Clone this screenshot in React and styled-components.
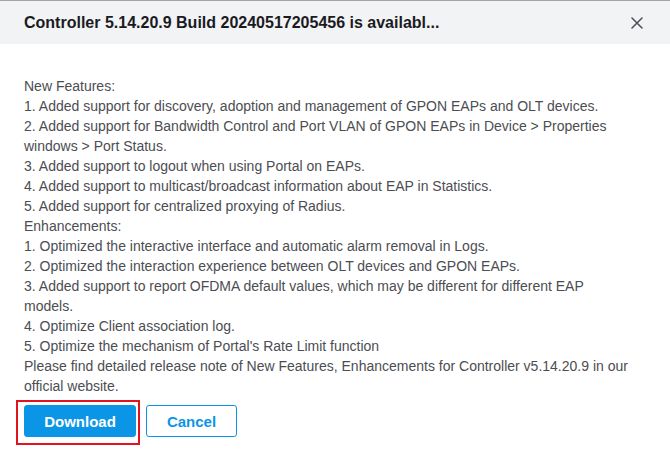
import React from 'react'
import styled, { createGlobalStyle } from 'styled-components'

const Global = createGlobalStyle`
  html, body {
    margin: 0;
    padding: 0;
    background: #fff;
    font-family: Arial, "Liberation Sans", sans-serif;
  }
`

const Dialog = styled.div`
  width: 670px;
  height: 473px;
  background: #fff;
  display: flex;
  flex-direction: column;
`

const Header = styled.div`
  height: 43px;
  border-top: 1px solid #a3a3a6;
  background: #f2f3f5;
  display: flex;
  align-items: center;
  justify-content: space-between;
  padding: 0 26px 0 24px;
`

const Title = styled.h3`
  margin: 0;
  font-size: 16px;
  font-weight: 700;
  color: #1b1b1f;
  font-family: "Liberation Sans", Arial, sans-serif;
`

const Close = styled.button`
  border: 0;
  background: transparent;
  padding: 0;
  width: 14px;
  height: 14px;
  display: flex;
  align-items: center;
  justify-content: center;
  cursor: pointer;
`

const Body = styled.div`
  padding: 32px 39px 0 24px;
  font-size: 14px;
  line-height: 20px;
  color: #4c4d52;
  font-family: "Liberation Sans", Arial, sans-serif;
`

const Line = styled.div``

const Footer = styled.div`
  display: flex;
  gap: 10px;
  padding: 9px 24px 0;
`

const Button = styled.button`
  height: 32px;
  width: ${p => p.$w}px;
  border-radius: 3px;
  font-family: "Liberation Sans", Arial, sans-serif;
  font-size: 15px;
  font-weight: 700;
  cursor: pointer;
  border: 1px solid #0b95e6;
  background: ${p => (p.$primary ? '#0b95e6' : '#fff')};
  color: ${p => (p.$primary ? '#fff' : '#0b95e6')};
`

const Marked = styled.div`
  position: relative;
  display: flex;
  &::after {
    content: '';
    position: absolute;
    top: -5px;
    left: -8px;
    right: -4px;
    bottom: -8px;
    border: 2px solid #e0141e;
    pointer-events: none;
  }
`

const lines = [
  'New Features:',
  '1. Added support for discovery, adoption and management of GPON EAPs and OLT devices.',
  '2. Added support for Bandwidth Control and Port VLAN of GPON EAPs in Device > Properties windows > Port Status.',
  '3. Added support to logout when using Portal on EAPs.',
  '4. Added support to multicast/broadcast information about EAP in Statistics.',
  '5. Added support for centralized proxying of Radius.',
  'Enhancements:',
  '1. Optimized the interactive interface and automatic alarm removal in Logs.',
  '2. Optimized the interaction experience between OLT devices and GPON EAPs.',
  '3. Added support to report OFDMA default values, which may be different for different EAP models.',
  '4. Optimize Client association log.',
  "5. Optimize the mechanism of Portal's Rate Limit function",
  'Please find detailed release note of New Features, Enhancements for Controller v5.14.20.9 in our official website.',
]

export default function App() {
  return (
    <Dialog>
      <Global />
      <Header>
        <Title>Controller 5.14.20.9 Build 20240517205456 is availabl...</Title>
        <Close aria-label="Close">
          <svg width="12" height="12" viewBox="0 0 12 12">
            <path d="M1 1L11 11M11 1L1 11" stroke="#4a4e58" strokeWidth="1.5" strokeLinecap="round" />
          </svg>
        </Close>
      </Header>
      <Body>
        {lines.map((t, i) => (
          <Line key={i}>{t}</Line>
        ))}
      </Body>
      <Footer>
        <Marked>
          <Button $primary $w={112}>Download</Button>
        </Marked>
        <Button $w={91}>Cancel</Button>
      </Footer>
    </Dialog>
  )
}
